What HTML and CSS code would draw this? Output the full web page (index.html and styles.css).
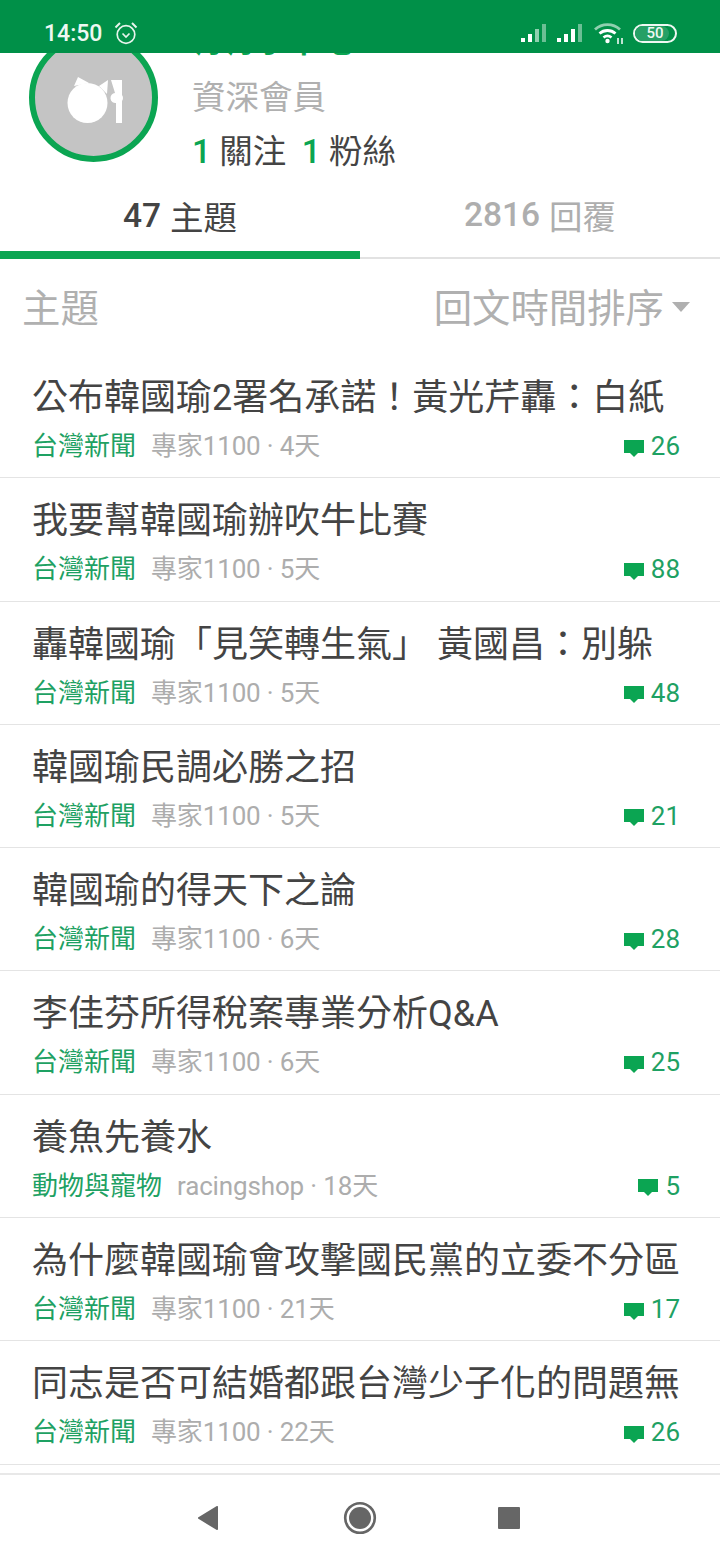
FILE: index.html
```html
<!DOCTYPE html>
<html lang="zh-Hant">
<head>
  <meta charset="UTF-8" />
  <meta name="viewport" content="width=device-width, initial-scale=1.0"/>
  <title>主題</title>
  <link rel="stylesheet" href="styles.css">
</head>
<body>
  <div class="statusbar">
    <div class="status-left">
      <span class="clock">14:50</span>
      <svg class="alarm" width="24" height="24" viewBox="0 0 24 24" fill="none" stroke="#e6f4ec" stroke-width="1.7">
        <circle cx="12" cy="13.500" r="8.800"/>
        <path d="M8.500 12.500l3.500 3.500 3.500-3.500"/>
        <path d="M1.500 6.500L6 2M22.500 6.500L18 2" stroke-width="2"/>
      </svg>
    </div>
    <div class="status-right">
      <svg width="27" height="20" viewBox="0 0 27 20">
        <rect x="0" y="15" width="4" height="4" fill="#fff"/>
        <rect x="7" y="11" width="4" height="8" fill="#fff"/>
        <rect x="14" y="6" width="4" height="13" fill="#8fd0af"/>
        <rect x="21" y="1" width="4" height="18" fill="#6cbf95"/>
      </svg>
      <svg width="27" height="20" viewBox="0 0 27 20">
        <rect x="0" y="15" width="4" height="4" fill="#fff"/>
        <rect x="7" y="11" width="4" height="8" fill="#fff"/>
        <rect x="14" y="6" width="4" height="13" fill="#fff"/>
        <rect x="21" y="1" width="4" height="18" fill="#6cbf95"/>
      </svg>
      <svg class="wifi" width="30" height="24" viewBox="0 0 30 24" fill="none">
        <path d="M1 8.500C8 2 19 2 26 8.500" stroke="#8fd0af" stroke-width="2.800"/>
        <path d="M5.500 12.500C10 8.500 17 8.500 21.500 12.500" stroke="#fff" stroke-width="2.800"/>
        <path d="M9.500 16.500C12 14.500 15 14.500 17.500 16.500" stroke="#fff" stroke-width="2.800"/>
        <circle cx="13.500" cy="20" r="2.200" fill="#fff"/>
        <path d="M24 23v-6M28 17v6" stroke="#fff" stroke-width="1.500"/>
      </svg>
      <div class="battery"><span class="battery-fill"></span><span class="battery-num">50</span></div>
    </div>
  </div>

  <section class="profile">
    <div class="avatar">
      <svg width="60" height="50" viewBox="0 0 60 50" fill="#fff">
        <circle cx="23.500" cy="30" r="20"/>
        <path d="M14 4l11 6-15 3zM44 7l-9 6 8 8z"/>
        <path d="M47 7h11v43h-6V30a5 5 0 0 1-1-10z"/>
        <circle cx="54" cy="25" r="5"/>
      </svg>
    </div>
    <div class="profile-info">
      <div class="profile-name">青青小草地</div>
      <div class="profile-rank">資深會員</div>
      <div class="profile-follow"><b>1</b> 關注 <b class="second">1</b> 粉絲</div>
    </div>
  </section>

  <div class="tabs">
    <div class="tab active"><b>47</b> 主題</div>
    <div class="tab"><b>2816</b> 回覆</div>
  </div>

  <div class="list-head">
    <span>主題</span>
    <span class="sort">回文時間排序<i class="caret"></i></span>
  </div>

  <ul class="topics">
    <li class="topic">
      <div class="topic-title">公布韓國瑜2署名承諾！黃光芹轟：白紙</div>
      <div class="topic-meta"><span class="board">台灣新聞</span><span class="by">專家1100 · 4天</span><span class="replies"><svg width="20" height="19" viewBox="0 0 20 19"><path d="M0 1h20v13h-6l-4 4-4-4H0z"/></svg>26</span></div>
    </li>
    <li class="topic">
      <div class="topic-title">我要幫韓國瑜辦吹牛比賽</div>
      <div class="topic-meta"><span class="board">台灣新聞</span><span class="by">專家1100 · 5天</span><span class="replies"><svg width="20" height="19" viewBox="0 0 20 19"><path d="M0 1h20v13h-6l-4 4-4-4H0z"/></svg>88</span></div>
    </li>
    <li class="topic">
      <div class="topic-title">轟韓國瑜「見笑轉生氣」 黃國昌：別躲</div>
      <div class="topic-meta"><span class="board">台灣新聞</span><span class="by">專家1100 · 5天</span><span class="replies"><svg width="20" height="19" viewBox="0 0 20 19"><path d="M0 1h20v13h-6l-4 4-4-4H0z"/></svg>48</span></div>
    </li>
    <li class="topic">
      <div class="topic-title">韓國瑜民調必勝之招</div>
      <div class="topic-meta"><span class="board">台灣新聞</span><span class="by">專家1100 · 5天</span><span class="replies"><svg width="20" height="19" viewBox="0 0 20 19"><path d="M0 1h20v13h-6l-4 4-4-4H0z"/></svg>21</span></div>
    </li>
    <li class="topic">
      <div class="topic-title">韓國瑜的得天下之論</div>
      <div class="topic-meta"><span class="board">台灣新聞</span><span class="by">專家1100 · 6天</span><span class="replies"><svg width="20" height="19" viewBox="0 0 20 19"><path d="M0 1h20v13h-6l-4 4-4-4H0z"/></svg>28</span></div>
    </li>
    <li class="topic">
      <div class="topic-title">李佳芬所得稅案專業分析Q&amp;A</div>
      <div class="topic-meta"><span class="board">台灣新聞</span><span class="by">專家1100 · 6天</span><span class="replies"><svg width="20" height="19" viewBox="0 0 20 19"><path d="M0 1h20v13h-6l-4 4-4-4H0z"/></svg>25</span></div>
    </li>
    <li class="topic">
      <div class="topic-title">養魚先養水</div>
      <div class="topic-meta"><span class="board">動物與寵物</span><span class="by">racingshop · 18天</span><span class="replies"><svg width="20" height="19" viewBox="0 0 20 19"><path d="M0 1h20v13h-6l-4 4-4-4H0z"/></svg>5</span></div>
    </li>
    <li class="topic">
      <div class="topic-title">為什麼韓國瑜會攻擊國民黨的立委不分區</div>
      <div class="topic-meta"><span class="board">台灣新聞</span><span class="by">專家1100 · 21天</span><span class="replies"><svg width="20" height="19" viewBox="0 0 20 19"><path d="M0 1h20v13h-6l-4 4-4-4H0z"/></svg>17</span></div>
    </li>
    <li class="topic">
      <div class="topic-title">同志是否可結婚都跟台灣少子化的問題無</div>
      <div class="topic-meta"><span class="board">台灣新聞</span><span class="by">專家1100 · 22天</span><span class="replies"><svg width="20" height="19" viewBox="0 0 20 19"><path d="M0 1h20v13h-6l-4 4-4-4H0z"/></svg>26</span></div>
    </li>
  </ul>

  <nav class="navbar">
    <svg width="24" height="26" viewBox="2 0 24 26"><path d="M22 2v22a1 1 0 0 1-1.600.800L1 13 20.400 1.200A1 1 0 0 1 22 2z" fill="#666"/></svg>
    <svg width="34" height="34" viewBox="0 0 34 34"><circle cx="17" cy="17" r="14.800" fill="none" stroke="#666" stroke-width="2.600"/><circle cx="17" cy="17" r="11" fill="#666"/></svg>
    <div class="nav-square"></div>
  </nav>
</body>
</html>
```

FILE: styles.css
```css
* {
  box-sizing: border-box;
}
html, body {
  margin: 0;
  height: 1560px;
  overflow: hidden;
}
body {
  position: relative;
  font-family: Roboto, "Noto Sans CJK TC", sans-serif;
  background: #fff;
  color: #444;
}

/* status bar sits over the scrolled profile */
.statusbar {
  position: absolute;
  top: 0;
  left: 0;
  right: 0;
  height: 53px;
  z-index: 2;
  background: #009048;
  color: #eef8f2;
  display: flex;
  justify-content: space-between;
  align-items: center;
  padding: 13px 43px 0 44px;
}
.status-left {
  display: flex;
  align-items: center;
  gap: 12px;
}
.clock {
  font-size: 23px;
  font-weight: 500;
}
.status-right {
  display: flex;
  align-items: center;
  gap: 9px;
}
.wifi {
  margin-left: 1px;
}
.battery {
  position: relative;
  width: 44px;
  height: 19px;
  border: 2px solid #eef8f2;
  border-radius: 10px;
  overflow: hidden;
  display: flex;
  align-items: center;
  justify-content: center;
}
.battery-fill {
  position: absolute;
  left: 0;
  top: 0;
  bottom: 0;
  width: 85%;
  background: #26a066;
  border-radius: 0 8px 8px 0;
}
.battery-num {
  position: relative;
  font-size: 15px;
  font-weight: 500;
  line-height: 1;
}

.profile {
  display: flex;
  height: 180px;
  padding: 33px 0 0 29px;
  gap: 34px;
}
.avatar {
  width: 129px;
  height: 129px;
  border-radius: 50%;
  background: #c4c4c4;
  border: 6px solid #0ba552;
  display: flex;
  align-items: center;
  justify-content: center;
  flex-shrink: 0;
}
.profile-info {
  margin-top: -14px;
}
.profile-name {
  font-size: 32px;
  font-weight: 700;
  line-height: 44px;
  color: #0ba552;
}
.profile-rank {
  font-size: 33.500px;
  line-height: 48px;
  color: #b0b0b0;
  margin-top: 11px;
}
.profile-follow {
  font-size: 33.500px;
  line-height: 50px;
  margin-top: 5px;
}
.profile-follow b {
  color: #0ba552;
  font-weight: 500;
}
.profile-follow .second {
  margin-left: 7px;
}

.tabs {
  display: flex;
  height: 79px;
  border-bottom: 2px solid #e2e2e2;
}
.tab {
  flex: 1;
  display: flex;
  align-items: center;
  justify-content: center;
  gap: 9px;
  font-size: 33.500px;
  color: #aeaeae;
  padding-bottom: 8px;
}
.tab b {
  font-weight: 500;
}
.tab.active {
  color: #444;
  border-bottom: 8px solid #0ba552;
  margin-bottom: -2px;
  padding-bottom: 0;
}

.list-head {
  display: flex;
  justify-content: space-between;
  align-items: center;
  height: 96px;
  padding: 0 30px 4px 22px;
  font-size: 38.400px;
  color: #b0b0b0;
}
.sort {
  display: flex;
  align-items: center;
}
.caret {
  width: 0;
  height: 0;
  border-left: 9px solid transparent;
  border-right: 9px solid transparent;
  border-top: 10px solid #b0b0b0;
  margin-left: 8px;
  margin-top: 3px;
}

.topics {
  list-style: none;
  margin: 0;
  padding: 0;
}
.topic {
  height: 123.300px;
  padding: 18px 40px 0 32px;
  border-bottom: 1.500px solid #e4e4e4;
}
.topic-title {
  font-size: 36px;
  line-height: 50px;
  color: #444;
  white-space: nowrap;
}
.topic-meta {
  display: flex;
  align-items: center;
  font-size: 26px;
  line-height: 38px;
  margin-top: 4px;
}
.board {
  color: #1ea163;
  margin-right: 15px;
}
.by {
  color: #adadad;
  letter-spacing: -0.15px;
}
.replies {
  margin-left: auto;
  display: flex;
  align-items: center;
  gap: 7px;
  color: #1ea163;
}
.replies svg {
  fill: #0ba552;
  margin-top: 4px;
}

/* android nav bar pinned to the bottom */
.navbar {
  position: absolute;
  left: 0;
  right: 0;
  bottom: 0;
  height: 87px;
  background: #fff;
  border-top: 2px solid #e8e8e8;
  display: flex;
  align-items: center;
  justify-content: center;
  gap: 121px;
  padding-right: 3px;
}
.nav-square {
  width: 22px;
  height: 22px;
  background: #666;
  border-radius: 1px;
}
```
